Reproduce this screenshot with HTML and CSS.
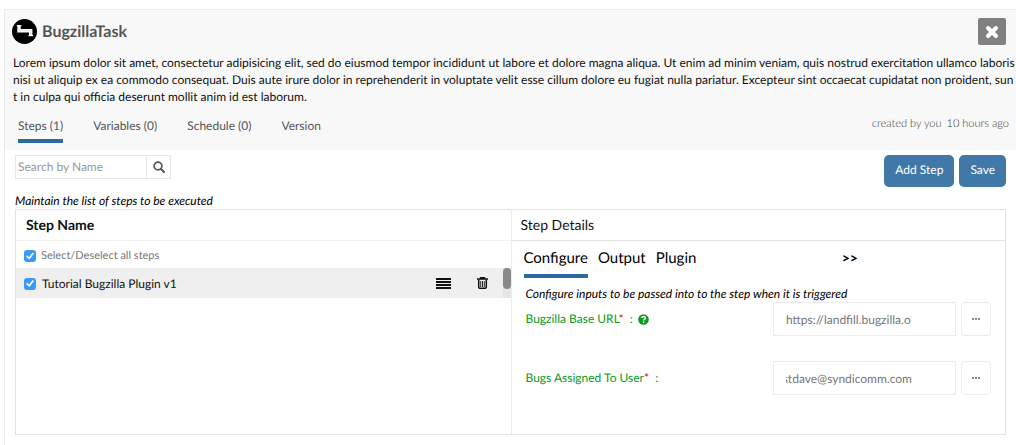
FILE: index.html
```html
<!DOCTYPE html>
<html lang="en">
<head>
<meta charset="utf-8">
<title>BugzillaTask</title>
<link rel="stylesheet" href="styles.css">
</head>
<body>
<main class="task">
  <header class="task-header">
    <div class="title-bar">
      <svg class="logo" viewBox="0 0 25 25" aria-hidden="true">
        <circle cx="12.500" cy="12.500" r="12.500" fill="#000"/>
        <path d="M7 6.500V11.700H18.700V17" fill="none" stroke="#fff" stroke-width="3.400"/>
        <path d="M4.800 6.700h4.500M16.500 16.700h4.500" stroke="#fff" stroke-width="1.200"/>
        <path d="M7 7.800v4h11.700v4" fill="none" stroke="#e2dce8" stroke-width="1"/>
      </svg>
      <h1 class="title">BugzillaTask</h1>
      <button class="close" type="button" aria-label="Close">
        <svg width="14" height="14" viewBox="0 0 14 14" aria-hidden="true"><path d="M3 3l8 8M11 3l-8 8" stroke="#fff" stroke-width="4" stroke-linecap="round"/></svg>
      </button>
    </div>
    <p class="description">Lorem ipsum dolor sit amet, consectetur adipisicing elit, sed do eiusmod tempor incididunt ut labore et dolore magna aliqua. Ut enim ad minim veniam, quis nostrud exercitation ullamco laboris<br>nisi ut aliquip ex ea commodo consequat. Duis aute irure dolor in reprehenderit in voluptate velit esse cillum dolore eu fugiat nulla pariatur. Excepteur sint occaecat cupidatat non proident, sun<br>t in culpa qui officia deserunt mollit anim id est laborum.</p>
    <div class="nav-bar">
      <nav class="tabs">
        <a class="tab active" href="#steps">Steps (1)</a>
        <a class="tab" href="#variables">Variables (0)</a>
        <a class="tab" href="#schedule">Schedule (0)</a>
        <a class="tab" href="#version">Version</a>
      </nav>
      <p class="created"><span>created by you</span><span>10 hours ago</span></p>
    </div>
  </header>

  <section class="content" id="steps">
    <div class="toolbar">
      <form class="search">
        <input class="search-input" type="text" placeholder="Search by Name" aria-label="Search by Name">
        <button class="search-button" type="button" aria-label="Search">
          <svg width="12" height="12" viewBox="0 0 12 12" aria-hidden="true"><circle cx="5" cy="5" r="3.900" fill="none" stroke="#555" stroke-width="1.700"/><path d="M8 8l3 3" stroke="#555" stroke-width="2" stroke-linecap="round"/></svg>
        </button>
      </form>
      <div class="actions">
        <button class="primary" type="button">Add Step</button>
        <button class="primary" type="button">Save</button>
      </div>
    </div>
    <p class="hint">Maintain the list of steps to be executed</p>

    <div class="panels">
      <section class="step-list">
        <h2 class="list-heading">Step Name</h2>
        <label class="check-row select-all"><input class="check" type="checkbox" checked>Select/Deselect all steps</label>
        <div class="step-row">
          <label class="check-row step-name"><input class="check" type="checkbox" checked>Tutorial Bugzilla Plugin v1</label>
          <button class="icon-button" type="button" aria-label="Reorder">
            <svg width="15" height="11" viewBox="0 0 15 11" aria-hidden="true"><path d="M0 1h15M0 4h15M0 7h15M0 10h15" stroke="#111" stroke-width="1.800"/></svg>
          </button>
          <button class="icon-button" type="button" aria-label="Delete">
            <svg width="11" height="12" viewBox="0 0 11 12" aria-hidden="true"><path d="M0 2h11M3.500 2V.600h4V2" fill="none" stroke="#111" stroke-width="1.300"/><path d="M1.700 2.500v7.500q0 1.300 1.300 1.300h5q1.300 0 1.300-1.300V2.500" fill="none" stroke="#111" stroke-width="1.500"/><path d="M3.700 4v6M5.500 4v6M7.300 4v6" stroke="#111" stroke-width=".900"/></svg>
          </button>
          <div class="scroll-track"><div class="scroll-thumb"></div></div>
        </div>
      </section>

      <section class="details">
        <h2 class="details-heading">Step Details</h2>
        <nav class="detail-tabs">
          <a class="detail-tab active" href="#configure">Configure</a>
          <a class="detail-tab" href="#output">Output</a>
          <a class="detail-tab" href="#plugin">Plugin</a>
          <button class="more" type="button">&gt;&gt;</button>
        </nav>
        <div class="fields" id="configure">
          <p class="hint">Configure inputs to be passed into to the step when it is triggered</p>
          <div class="field">
            <div class="label-line">
              <label for="base-url">Bugzilla Base URL<span class="required">*</span>&nbsp; :</label>
              <svg width="11" height="11" viewBox="0 0 11 11" role="img" aria-label="Help"><circle cx="5.500" cy="5.500" r="5.300" fill="#0a9a1c"/><path d="M3.700 4.100Q3.900 2.500 5.600 2.500T7.400 4.100Q7.400 5 6.300 5.500Q5.600 5.900 5.600 6.500M5.600 7.600v1.300" fill="none" stroke="#fff" stroke-width="1.400"/></svg>
            </div>
            <input class="value" id="base-url" type="text" value="https://landfill.bugzilla.o">
            <button class="browse" type="button" aria-label="Choose a base URL"><svg width="8" height="2" viewBox="0 0 8 2" aria-hidden="true"><path d="M0 0h2v2H0zM3 0h2v2H3zM6 0h2v2H6z" fill="#888"/></svg></button>
          </div>
          <div class="field">
            <div class="label-line">
              <label for="assignee">Bugs Assigned To User<span class="required">*</span>&nbsp; :</label>
            </div>
            <input class="value anchored-end" id="assignee" type="text" value="stdave@syndicomm.com">
            <button class="browse" type="button" aria-label="Choose a user"><svg width="8" height="2" viewBox="0 0 8 2" aria-hidden="true"><path d="M0 0h2v2H0zM3 0h2v2H3zM6 0h2v2H6z" fill="#888"/></svg></button>
          </div>
        </div>
      </section>
    </div>
  </section>
</main>
</body>
</html>
```
FILE: styles.css
```css
* { box-sizing: border-box; }
body {
  margin: 0;
  padding: 9px 0 0 4px;
  background: #fff;
  color: #111;
  font: 12px/16px Lato, "Open Sans", sans-serif;
  text-rendering: geometricPrecision;
}
h1, h2, p { margin: 0; }
a { color: inherit; text-decoration: none; }
button, input { font: inherit; color: inherit; margin: 0; text-rendering: inherit; }
button { padding: 0; border: 0; background: none; cursor: pointer; }
svg { display: block; }

.task {
  min-height: calc(100vh - 9px);
  border: solid #ececec;
  border-width: 1px 0 0 1px;
  overflow-x: clip;
}

.task-header { height: 140px; padding: 8px 7px 0; background: #f8f8f8; }
.title-bar { display: flex; align-items: center; padding-right: 3px; }
.logo { width: 25px; height: 25px; }
.title { flex: 1; margin-left: 5px; color: #555; font-size: 16px; line-height: 20px; font-weight: 700; }
.close {
  display: grid;
  place-items: center;
  width: 28px;
  height: 27px;
  border-radius: 2px;
  background: #808080;
}
.description { margin: 9px 0 0 1px; line-height: 17px; white-space: nowrap; }
.nav-bar { display: flex; justify-content: space-between; padding: 13px 0 0 6px; color: #555; }
.tabs { display: flex; gap: 30px; }
.tab { padding-bottom: 5px; border-bottom: 4px solid transparent; }
.active { border-bottom-color: #2a6a9f; }
.created { display: flex; gap: 5px; margin-top: -2px; font-size: 11px; font-weight: 300; color: #333; }

.content { padding: 5px 10px 0; }
.toolbar { display: flex; justify-content: space-between; }
.search { display: flex; height: 24px; }
.search-input { width: 132px; padding: 0 2px; border: 1px solid #e8e8e8; background: #fff; outline: 0; }
.search-input::placeholder { color: #999; opacity: 1; }
.search-button { display: grid; place-items: center; width: 24px; border: solid #e8e8e8; border-width: 1px 1px 1px 0; }
.actions { display: flex; gap: 5px; }
.primary { height: 32px; padding: 0 11px 2px; border-radius: 5px; background: #4078a8; color: #fff; }
.hint { font-style: italic; color: #000; }
.toolbar + .hint { margin-top: 6px; }

.panels { display: flex; height: 226px; border: 1px solid #e2e2e2; }
.step-list { flex: 0 0 calc(50% + 1px); border-right: 1px solid #ececec; }
.list-heading { height: 31px; padding-left: 10px; border-bottom: 1px solid #f2f2f2; font-size: 14px; line-height: 30px; font-weight: 700; }
.check-row { display: flex; align-items: center; }
.check {
  display: grid;
  place-items: center;
  appearance: none;
  width: 12px;
  height: 12px;
  border-radius: 3px;
  background: #ccc;
}
.check:checked { background: #3b99fc; }
.check:checked::before {
  content: "";
  width: 8px;
  height: 8px;
  background: #fff;
  clip-path: polygon(0 55%, 15% 40%, 38% 65%, 82% 5%, 100% 18%, 42% 95%);
}
.select-all { height: 27px; padding: 3px 0 0 8px; gap: 5px; color: #777; font-size: 11px; }
.step-row { display: flex; align-items: center; height: 30px; padding-left: 8px; background: #efefef; }
.step-name { flex: 1; gap: 6px; padding-top: 1px; }
.icon-button { margin-right: 26px; }
.icon-button + .icon-button { margin-right: 15px; }
.scroll-track { align-self: stretch; width: 8px; background: #e5e5e5; }
.scroll-thumb { height: 21px; border-radius: 4px; background: #888; }

.details { flex: 1; }
.details-heading { height: 31px; padding-left: 9px; border-bottom: 1px solid #e2e2e2; font-size: 14px; line-height: 30px; font-weight: 400; }
.detail-tabs { display: flex; gap: 10px; padding: 7px 0 0 12px; font-size: 15px; line-height: 20px; color: #000; }
.detail-tab { padding-bottom: 6px; border-bottom: 4px solid transparent; }
.detail-tab.active { border-bottom-color: #2a6a9f; }
.more { align-self: flex-start; margin: 0 147px 0 auto; font-size: 14px; font-weight: 700; }
.fields { padding: 8px 14px 0 14px; }
.field { display: flex; gap: 5px; margin-bottom: 25px; }
.label-line { display: flex; flex: 1; align-items: center; gap: 5px; height: 34px; color: #0a9a1c; }
.required { color: #d00; }
.value { width: 183px; padding: 2px 43px 0 12px; border: 1px solid #ececec; background: #fff; color: #777; outline: 0; }
.anchored-end { direction: rtl; }
.browse { display: grid; place-items: center; width: 30px; border: 1px solid #ececec; border-radius: 4px; }
```
